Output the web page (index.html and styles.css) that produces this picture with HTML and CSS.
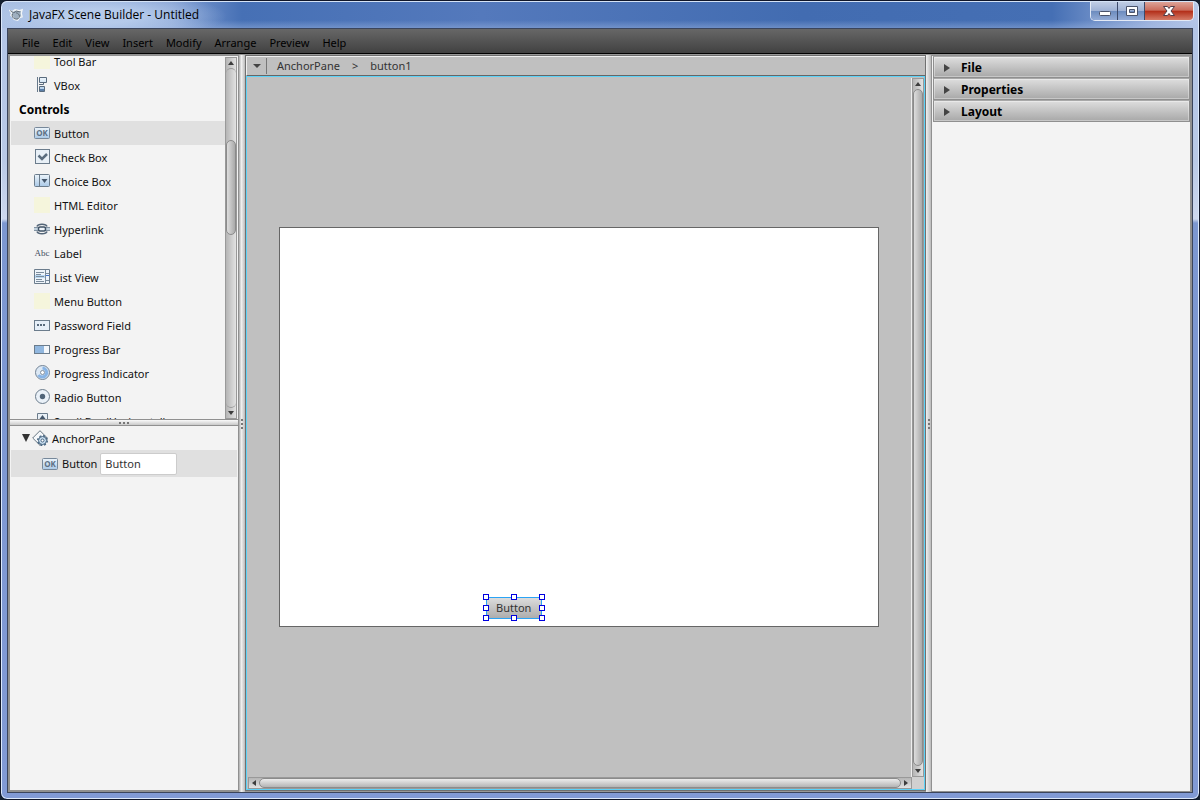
FILE: index.html
```html
<!DOCTYPE html>
<html lang="en">
<head>
<meta charset="utf-8">
<title>JavaFX Scene Builder - Untitled</title>
<link rel="stylesheet" href="styles.css">
</head>
<body>
<svg class="defs" aria-hidden="true">
  <defs>
    <linearGradient id="blue" x1="0" y1="0" x2="0" y2="1"><stop offset="0" stop-color="#edf5fb"/><stop offset="1" stop-color="#a9c8e6"/></linearGradient>
    <symbol id="ok" viewBox="0 0 16 16"><rect x=".5" y="2.5" width="15" height="11" rx="1" fill="url(#blue)" stroke="#77889a"/><text x="8" y="11" text-anchor="middle" class="ok-text">OK</text></symbol>
    <symbol id="vbox" viewBox="0 0 16 16"><path d="M3.500 0v15" stroke="#66788a"/><path d="M5.500.5h7v5h-7zM5.500 9.500h5v5h-5z" fill="url(#blue)" stroke="#596b7d"/><path d="M5 7.500h4.500v-2" fill="none" stroke="#596b7d"/><path d="M6 12h4v2H6z" fill="#5b7fa8"/></symbol>
    <symbol id="check" viewBox="0 0 16 16"><rect x="1.500" y=".5" width="14" height="14" fill="#e8f0f7" stroke="#6b7c8c"/><path d="M4.500 6.500l3.500 3.500 5-5" fill="none" stroke="#5a6c7e" stroke-width="2.500"/></symbol>
    <symbol id="choice" viewBox="0 0 16 16"><rect x=".5" y="1.500" width="15" height="12" rx="1" fill="url(#blue)" stroke="#6b7c8c"/><path d="M5.500 2v11" stroke="#6b7c8c"/><path d="M7.500 6h6l-3 4z" fill="#44566b"/></symbol>
    <symbol id="blank" viewBox="0 0 16 16"><path d="M0 0h16v16H0z" fill="#f5f5dc"/></symbol>
    <symbol id="link" viewBox="0 0 16 16"><path d="M0 6.500h16M0 9.500h16" stroke="#8293a3"/><path d="M3 5.500c1-3 9-3 10 0M3 10.500c1 3 9 3 10 0" fill="none" stroke="#536578" stroke-width="1.500"/><path d="M0 8h16" stroke="#c2d2df" stroke-width="2"/><rect x="4.500" y="6" width="7" height="4" rx="1.500" fill="#eef4fa" stroke="#405366" stroke-width="1.500"/></symbol>
    <symbol id="abc" viewBox="0 0 16 16"><text x="8" y="11" text-anchor="middle" class="abc-text">Abc</text></symbol>
    <symbol id="list" viewBox="0 0 16 16"><path d="M.5.5h15v14H.5z" fill="#eef4fa" stroke="#6b7c8c"/><path d="M1 6h10v3H1z" fill="#b9d7f1"/><path d="M11.500 1v13M12 4.500h3M12 11.500h3M2 3.500h8M2 5.500h5M2 7.500h8M2 10.500h6M2 12.500h8" stroke="#7b8c9c"/><path d="M12 6.500h3" stroke="#3f72cf"/></symbol>
    <symbol id="password" viewBox="0 0 16 16"><rect x=".5" y="3.500" width="15" height="10" fill="#e6eff8" stroke="#6b7c8c"/><path d="M3 7h2v2H3zM6 7h2v2H6zM9 7h2v2H9z" fill="#586a7c"/></symbol>
    <symbol id="bar" viewBox="0 0 16 16"><rect x=".5" y="4.500" width="15" height="8" fill="#f3f7fb" stroke="#6b7c8c"/><path d="M1 5h9v7H1z" fill="#91b7df"/></symbol>
    <symbol id="indicator" viewBox="0 0 16 16"><circle cx="8.500" cy="7.500" r="7" fill="#dce8f4" stroke="#728395"/><path d="M8.500 3a4.500 4.500 0 1 1-4 7" fill="none" stroke="#88b4e5" stroke-width="3"/><circle cx="8.500" cy="7.500" r="2" fill="#fff" stroke="#8190a0"/></symbol>
    <symbol id="radio" viewBox="0 0 16 16"><circle cx="8.500" cy="7.500" r="7" fill="#eaf1f8" stroke="#6b7c8c"/><circle cx="8.500" cy="7.500" r="2.700" fill="#506478"/></symbol>
    <symbol id="scroll" viewBox="0 0 16 16"><path d="M3.500.5h10v15h-10z" fill="#e9f0f6" stroke="#6b7c8c"/><path d="M8.500 2l3 4h-2v2h-2v-2h-2z" fill="#44566b"/></symbol>
    <symbol id="anchor" viewBox="0 0 16 16"><path d="M8 .7L15.300 8 8 15.300.7 8z" fill="#f5f8fb" stroke="#65737f"/><circle cx="10.500" cy="10.500" r="4" fill="#c8ddef" stroke="#466580"/><circle cx="10.500" cy="10.500" r="4.800" fill="none" stroke="#466580" stroke-width="1.400" stroke-dasharray="2 1.770"/><circle cx="10.500" cy="10.500" r="1.500" fill="#fff" stroke="#466580"/></symbol>
  </defs>
</svg>
<div class="window">
  <header class="titlebar">
    <svg class="app-icon" viewBox="0 0 16 14" aria-hidden="true"><path d="M1 2l3 1 3-2 5 1 3-1-1 4 1 4-3 1-2 3-4-1-2-3-2-2 1-2z" fill="#9fb0c0" stroke="#f3f6f8" stroke-width="1.500"/><path d="M1.500 2l4 2.500 3-2 4 1M4 5.500c-1 3 0 5 3 6s5-1 5-3-2-4-4-4" fill="none" stroke="#59656f"/></svg>
    <h1 class="title">JavaFX Scene Builder - Untitled</h1>
    <div class="window-buttons">
      <button class="win-btn" aria-label="Minimize"><svg viewBox="0 0 28 18"><rect x="8.500" y="9.500" width="11" height="4" rx="1" fill="#fff" stroke="#4a536b"/></svg></button>
      <button class="win-btn" aria-label="Maximize"><svg viewBox="0 0 28 18"><path d="M8.500 4.500h11v9h-11zM11.500 7.500v3h5v-3z" fill="#fff" fill-rule="evenodd" stroke="#4a536b"/></svg></button>
      <button class="win-btn close" aria-label="Close"><svg viewBox="0 0 28 18"><path d="M8.500 4.500h4l1.500 2 1.500-2h4l-3.500 4.500 3.500 4.500h-4l-1.500-2-1.500 2h-4l3.500-4.500z" fill="#fff" stroke="#503c48"/></svg></button>
    </div>
  </header>
  <div class="client">
    <nav class="menubar" aria-label="Main menu">
      <button>File</button><button>Edit</button><button>View</button><button>Insert</button><button>Modify</button><button>Arrange</button><button>Preview</button><button>Help</button>
    </nav>
    <main class="workspace">
      <aside class="left">
        <section class="library" aria-label="Library">
          <ul class="items">
            <li><svg><use href="#blank"/></svg><span>Tool Bar</span></li>
            <li><svg><use href="#vbox"/></svg><span>VBox</span></li>
            <li class="heading"><span>Controls</span></li>
            <li class="selected"><svg><use href="#ok"/></svg><span>Button</span></li>
            <li><svg><use href="#check"/></svg><span>Check Box</span></li>
            <li><svg><use href="#choice"/></svg><span>Choice Box</span></li>
            <li><svg><use href="#blank"/></svg><span>HTML Editor</span></li>
            <li><svg><use href="#link"/></svg><span>Hyperlink</span></li>
            <li><svg><use href="#abc"/></svg><span>Label</span></li>
            <li><svg><use href="#list"/></svg><span>List View</span></li>
            <li><svg><use href="#blank"/></svg><span>Menu Button</span></li>
            <li><svg><use href="#password"/></svg><span>Password Field</span></li>
            <li><svg><use href="#bar"/></svg><span>Progress Bar</span></li>
            <li><svg><use href="#indicator"/></svg><span>Progress Indicator</span></li>
            <li><svg><use href="#radio"/></svg><span>Radio Button</span></li>
            <li><svg><use href="#scroll"/></svg><span>Scroll Bar (Horizontal)</span></li>
          </ul>
          <div class="scrollbar vertical">
            <button class="arrow" aria-label="Scroll up"><svg viewBox="0 0 6 4"><path d="M0 4l3-4 3 4z"/></svg></button>
            <div class="track"><div class="before"></div><div class="thumb part"></div></div>
            <button class="arrow" aria-label="Scroll down"><svg viewBox="0 0 6 4"><path d="M0 0h6L3 4z"/></svg></button>
          </div>
        </section>
        <div class="splitter row"><i></i><i></i><i></i></div>
        <section class="hierarchy" aria-label="Hierarchy">
          <div class="node root"><svg class="disclosure" viewBox="0 0 8 8"><path d="M0 0h8L4 8z"/></svg><svg class="icon"><use href="#anchor"/></svg><span>AnchorPane</span></div>
          <div class="node child"><svg class="icon"><use href="#ok"/></svg><label for="node-text">Button</label><input id="node-text" type="text" value="Button"></div>
        </section>
      </aside>
      <div class="splitter col"><i></i><i></i><i></i></div>
      <section class="center">
        <nav class="breadcrumb" aria-label="Selection path">
          <button class="crumb-menu" aria-label="Path menu"><svg viewBox="0 0 8 4"><path d="M0 0h8L4 4z"/></svg></button>
          <button class="crumb">AnchorPane</button><span class="sep">&gt;</span><button class="crumb">button1</button>
        </nav>
        <div class="editor">
          <div class="viewport">
            <div class="canvas">
              <div class="selection">
                <button class="fx-button">Button</button>
                <b class="n w"></b><b class="n c"></b><b class="n e"></b><b class="m w"></b><b class="m e"></b><b class="s w"></b><b class="s c"></b><b class="s e"></b>
              </div>
            </div>
          </div>
          <div class="scrollbar vertical">
            <button class="arrow" aria-label="Scroll up"><svg viewBox="0 0 6 4"><path d="M0 4l3-4 3 4z"/></svg></button>
            <div class="track"><div class="thumb"></div></div>
            <button class="arrow" aria-label="Scroll down"><svg viewBox="0 0 6 4"><path d="M0 0h6L3 4z"/></svg></button>
          </div>
          <div class="scrollbar horizontal">
            <button class="arrow" aria-label="Scroll left"><svg viewBox="0 0 4 6"><path d="M4 0v6L0 3z"/></svg></button>
            <div class="track"><div class="thumb"></div></div>
            <button class="arrow" aria-label="Scroll right"><svg viewBox="0 0 4 6"><path d="M0 0v6l4-3z"/></svg></button>
          </div>
          <div class="corner"></div>
        </div>
      </section>
      <div class="splitter col narrow"><i></i><i></i><i></i></div>
      <aside class="inspector" aria-label="Inspector">
        <button class="section"><svg viewBox="0 0 6 8"><path d="M0 0v8l6-4z"/></svg>File</button>
        <button class="section"><svg viewBox="0 0 6 8"><path d="M0 0v8l6-4z"/></svg>Properties</button>
        <button class="section"><svg viewBox="0 0 6 8"><path d="M0 0v8l6-4z"/></svg>Layout</button>
      </aside>
    </main>
  </div>
</div>
</body>
</html>
```
FILE: styles.css
```css
* { box-sizing: border-box; }
body { margin: 0; background: #14202f; font: 11px/16px "Noto Sans", "Open Sans", sans-serif; color: #111; }
button { margin: 0; padding: 0; border: 0; background: none; font: inherit; color: inherit; }
svg { display: block; flex: none; }
.defs { position: absolute; width: 0; height: 0; }
.ok-text { font: bold 8px "Open Sans", sans-serif; fill: #5c7084; }
.abc-text { font: 9px "Liberation Serif", serif; fill: #3f4f5f; }

.window {
  height: 100vh;
  display: flex;
  flex-direction: column;
  padding: 0 6px 6px;
  border: 1px solid #101629;
  border-radius: 7px;
  box-shadow: inset 0 0 0 1px #dce9fb;
  background: linear-gradient(to bottom, #b2c4e6 0, #b9c9e6 160px, #cdd8ee 218px, #7c97d1 222px, #819ad5 100%);
}
.titlebar {
  flex: none;
  height: 27px;
  margin: 0 -5px;
  padding-left: 7px;
  display: flex;
  align-items: center;
  gap: 6px;
  border-top: 1px solid #d5e3f6;
  border-radius: 6px 6px 0 0;
  background:
    radial-gradient(ellipse 125px 24px at 100px 14px, rgba(190, 210, 239, .8) 30%, rgba(190, 210, 239, 0)),
    linear-gradient(to bottom, transparent 70%, rgba(170, 192, 230, .4)),
    linear-gradient(to right, #a9bfe3 0, #829fd3 170px, #4670b5 240px, #5479bc 480px, #426cb1 800px, #456fb4 1050px, #9db3de 1150px, #b6c7e8 100%);
}
.app-icon { width: 14px; height: 14px; }
.title { flex: 1; margin: 0; font: 12px/16px "Open Sans", sans-serif; color: #000; }
.window-buttons { align-self: flex-start; display: flex; margin-right: 4px; border: 1px solid #e3eaf6; border-top: 0; border-radius: 0 0 5px 5px; overflow: hidden; }
.win-btn { width: 27px; height: 18px; border-right: 1px solid #3c4a6b; background: linear-gradient(#c0cde4 0, #9fb2d5 48%, #6d8cbf 52%, #93abd5 100%); }
.win-btn svg { height: 18px; width: 28px; margin: auto; }
.win-btn.close { width: 48px; border-right: 0; background: linear-gradient(#dda398 0, #cb6d5d 45%, #b4301b 52%, #d57c68 100%); }

.client { flex: 1; min-height: 0; display: flex; flex-direction: column; border: 1px solid #3b455c; }
.menubar { flex: none; height: 25px; display: flex; align-items: center; gap: 13px; padding: 4px 14px 0; background: linear-gradient(#676767, #414141); border-bottom: 1px solid #000; color: #000; }

.workspace { flex: 1; min-height: 0; display: grid; grid-template-columns: 231px 6px minmax(0, 1fr) 5px 261px; background: #999; }
.left { min-height: 0; display: flex; flex-direction: column; border: 2px solid #909090; border-width: 2px 1px 2px 2px; }
.library { flex: none; height: 363px; display: flex; overflow: hidden; background: #f3f3f3; }
.items { flex: 1; margin: -7px 0 0 1px; padding: 0; list-style: none; }
.items li { height: 24px; display: flex; align-items: center; gap: 4px; padding-left: 23px; white-space: nowrap; }
.items span, .root span { padding-top: 2px; }
.items svg { width: 16px; height: 16px; }
.items .heading { padding-left: 8px; font-weight: bold; font-size: 12px; color: #000; }
.items .selected { background: #e0e0e0; }
.library .scrollbar { margin: 1px 1px 0 0; }

.scrollbar { display: flex; border: 1px solid #999; background: linear-gradient(to right, #b5b5b5, #e2e2e2); }
.scrollbar.vertical { width: 12px; flex-direction: column; }
.scrollbar.horizontal { height: 12px; background: linear-gradient(#b5b5b5, #e2e2e2); }
.arrow { flex: none; width: 10px; height: 10px; display: grid; place-items: center; }
.arrow svg { width: 6px; height: 4px; fill: #3d3d3d; }
.horizontal .arrow svg { width: 4px; height: 6px; }
.track { flex: 1; min-height: 0; display: flex; flex-direction: column; }
.thumb { flex: 1; border: 1px solid #8b8b8b; border-radius: 5px; background: linear-gradient(to right, #ddd, #aaa); }
.horizontal .thumb { background: linear-gradient(#ececec, #b4b4b4); }
.library .track { border: 1px solid #999; border-width: 1px 0; border-radius: 5px; }
.before { flex: 0 0 21%; }
.thumb.part { flex: 0 0 28%; }

.splitter { display: flex; align-items: center; justify-content: center; gap: 2px; }
.splitter i { flex: none; width: 2px; height: 2px; background: #777; }
.splitter.row { flex: none; height: 7px; border: 1px solid #909090; border-width: 1px 0; background: linear-gradient(#fafafa, #c9c9c9); }
.splitter.col { flex-direction: column; margin-top: 1px; background: linear-gradient(to right, #aaa, #f0f0f0 40%, #bbb); }
.splitter.narrow { background: linear-gradient(to right, #f0f0f0, #bbb); }

.hierarchy { flex: 1; background: #f3f3f3; padding-left: 1px; }
.node { display: flex; align-items: center; }
.node .icon { width: 16px; height: 16px; }
.root { height: 24px; padding-left: 11px; gap: 3px; }
.root .icon { margin-left: -1px; margin-right: 1px; }
.disclosure { width: 8px; height: 8px; fill: #333; }
.child { height: 27px; padding-left: 31px; gap: 4px; background: #e0e0e0; margin-right: 1px; }
.child input { width: 77px; height: 22px; margin-left: -1px; padding: 0 4px; border: 1px solid #ccc; border-radius: 2px; background: #fff; font: inherit; color: #333; }

.center { min-width: 0; min-height: 0; display: flex; flex-direction: column; margin: 1px 0; border: 1px solid #707070; }
.breadcrumb { flex: none; height: 20px; display: flex; align-items: center; color: #333; background: #c0c0c0; border: 1px solid #efefef; border-width: 1px 0 1px 1px; border-bottom-color: #666; }
.crumb-menu { width: 20px; height: 16px; display: grid; place-items: center; border-right: 1px solid #777; }
.crumb-menu svg { width: 8px; height: 4px; fill: #444; }
.crumb:nth-of-type(2) { margin-left: 10px; }
.sep { margin: 0 12px; }
.editor { flex: 1; min-height: 0; display: grid; grid-template-columns: minmax(0, 1fr) 12px; grid-template-rows: minmax(0, 1fr) 12px; border: 1px solid #5cd2f7; padding: 1px 0 0 1px; background: #c0c0c0; }
.viewport { display: grid; place-items: center; overflow: hidden; padding: 0 1px 1px 0; border-right: 1px solid #eee; }
.canvas { position: relative; width: 600px; height: 400px; border: 1px solid #666; background: #fff; }
.corner { background: #d0d0d0; }

.selection { position: absolute; left: 206px; top: 369px; border: 1px solid #2ba4f5; }
.fx-button { display: block; height: 20px; padding: 0 10px 0 9px; background: linear-gradient(#dcdcdc, #adadad); color: #333; }
.selection b { position: absolute; width: 6px; height: 6px; border: 1px solid #0000e0; background: #fff; }
.selection .n { top: -4px; }
.selection .m { top: calc(50% - 3px); }
.selection .s { bottom: -3px; }
.selection .w { left: -4px; }
.selection .c { left: calc(50% - 3px); }
.selection .e { right: -4px; }

.inspector { margin-top: 1px; padding: 0 0 0 1px; border: 1px solid #909090; border-right-width: 2px; background: #f3f3f3; }
.section { width: 100%; height: 22px; display: flex; align-items: center; gap: 11px; padding: 1px 10px 0; border: 1px solid #8f8f8f; border-top-color: #a8a8a8; background: linear-gradient(#dedede, #a8a8a8); box-shadow: inset 0 0 0 1px rgba(255, 255, 255, .35); font-weight: bold; font-size: 12px; color: #000; }
.section svg { width: 6px; height: 8px; fill: #444; }
```
